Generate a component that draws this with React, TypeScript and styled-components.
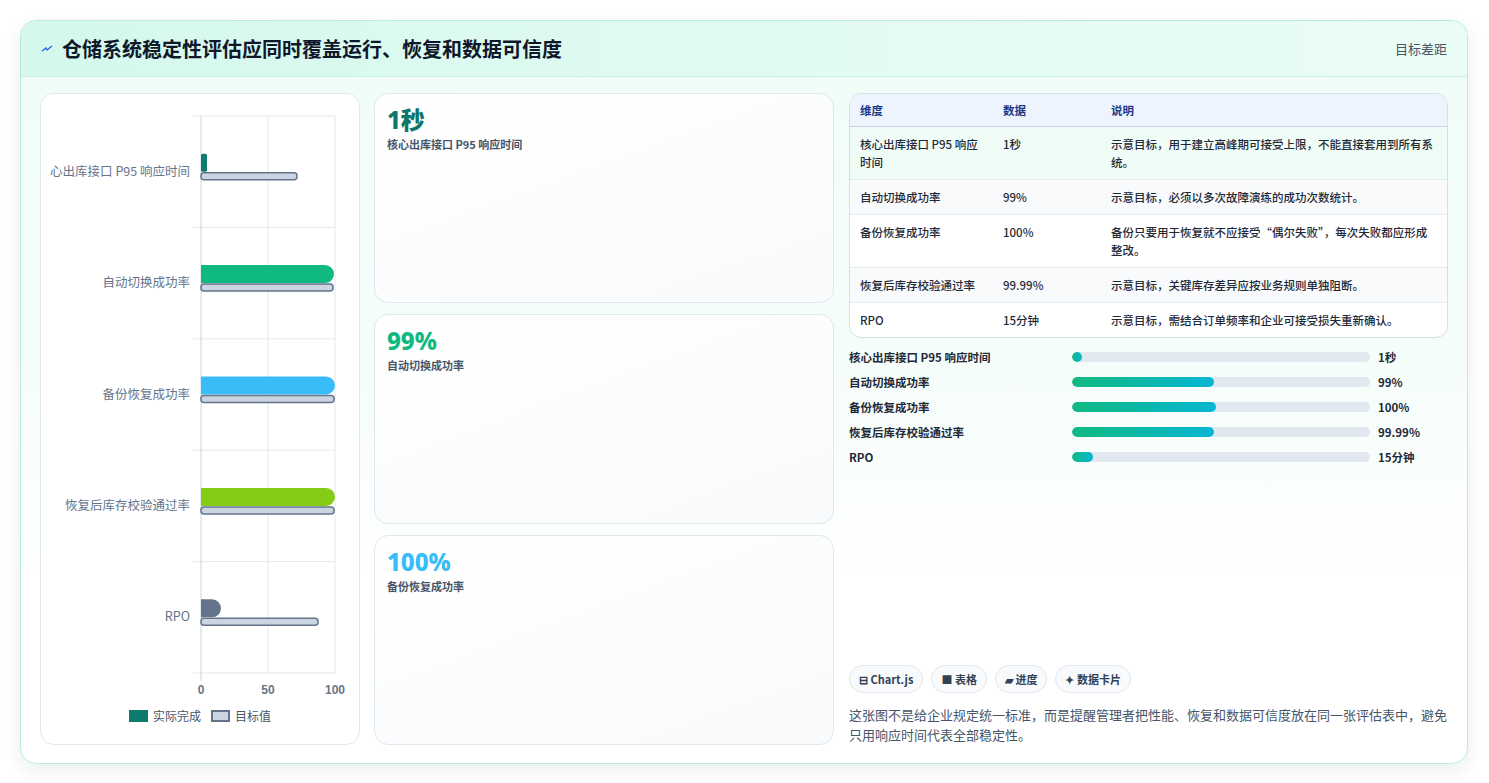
import React from "react";
import styled, { createGlobalStyle } from "styled-components";

const Global = createGlobalStyle`
  html, body { margin: 0; padding: 0; background: #fff; }
  body { font-family: "Noto Sans CJK SC", "Noto Sans", sans-serif; color: #1f2937; }
  * { box-sizing: border-box; }
`;

const Page = styled.div`
  padding: 20px 21px 19px 20px;
  height: 783px;
`;
const Card = styled.div`
  height: 744px;
  border: 1px solid #b9ecdf;
  border-radius: 16px;
  overflow: hidden;
  display: flex;
  flex-direction: column;
  background: linear-gradient(180deg, #effdf7 0%, #f6fdfb 50%, #ffffff 75%);
  box-shadow: 0 6px 18px rgba(15, 23, 42, 0.08);
`;
const Header = styled.div`
  height: 56px;
  flex: none;
  display: flex;
  align-items: center;
  justify-content: space-between;
  padding: 0 20px 0 20px;
  background: linear-gradient(90deg, #d4f8ec, #e3fbf4 60%, #eafcf6);
  border-bottom: 1px solid #cdeee4;
`;
const Title = styled.h1`
  margin: 0;
  font-size: 20px;
  font-weight: 700;
  color: #0f172a;
  display: flex;
  align-items: center;
  gap: 9px;
`;
const Gap = styled.span`
  font-size: 13px;
  color: #475569;
`;
const Body = styled.div`
  flex: 1;
  display: grid;
  grid-template-columns: 320px 460px 600px;
  gap: 14px;
  column-gap: 14px;
  padding: 16px 19px 18px 19px;
  min-height: 0;
  & > :nth-child(3) { margin-left: 1px; }
`;
const Panel = styled.div`
  background: #fff;
  border: 1px solid #dfe7ef;
  border-radius: 14px;
  display: flex;
  flex-direction: column;
`;
const ChartPanel = styled(Panel)`
  padding: 0;
  align-items: stretch;
`;
const Legend = styled.div`
  display: flex;
  justify-content: center;
  gap: 10px;
  font-size: 12px;
  color: #475569;
  margin-top: 1px;
`;
const LegendItem = styled.span`
  display: flex;
  align-items: center;
  gap: 5px;
`;
const Swatch = styled.span<{ $fill: string; $stroke: string }>`
  width: 19px;
  height: 12px;
  background: ${(p) => p.$fill};
  border: 2px solid ${(p) => p.$stroke};
`;
const Stats = styled.div`
  display: flex;
  flex-direction: column;
  gap: 11px;
`;
const Stat = styled(Panel)`
  flex: 1;
  padding: 11px 12px;
  background: linear-gradient(160deg, #ffffff, #f8fafc);
`;
const Big = styled.div<{ $c: string }>`
  font-family: "Noto Sans", "Noto Sans CJK SC", sans-serif;
  font-size: 24px;
  font-weight: 800;
  color: ${(p) => p.$c};
  line-height: 30px;
`;
const StatLabel = styled.div`
  font-size: 11px;
  font-weight: 600;
  color: #475569;
  margin-top: 1px;
`;
const Right = styled.div`
  display: flex;
  flex-direction: column;
`;
const TableWrap = styled.div`
  border: 1px solid #d5dee9;
  border-radius: 12px;
  overflow: hidden;
  background: #fff;
`;
const Table = styled.table`
  width: 100%;
  border-collapse: collapse;
  font-size: 11.5px;
  font-weight: 500;
  color: #1f2937;
  td, th { text-align: left; vertical-align: top; padding: 8px 10px; line-height: 18px; }
  th { background: #eef4fe; color: #1e3a8a; font-weight: 600; padding: 7px 10px; border-bottom: 1px solid #cbd5e1; }
  tr + tr td { border-top: 1px solid #e5ebf1; }
  tbody tr:nth-child(even) td { background: #f8fafc; }
  tbody tr:first-child td { background: #f0fdf7; }
`;
const Bars = styled.div`
  display: flex;
  flex-direction: column;
  gap: 7px;
  margin-top: 10px;
`;
const BarRow = styled.div`
  display: grid;
  grid-template-columns: 223px 306px 1fr;
  align-items: center;
  font-size: 11.5px;
  font-weight: 600;
  color: #1f2937;
  height: 18px;
`;
const Track = styled.div`
  height: 10px;
  border-radius: 5px;
  background: #e2e8f0;
  margin-right: 8px;
  overflow: hidden;
`;
const Fill = styled.div`
  height: 100%;
  border-radius: 5px;
  background: linear-gradient(90deg, #10b981, #06b6d4);
`;
const Spacer = styled.div`flex: 1;`;
const Chips = styled.div`
  display: flex;
  gap: 8px;
`;
const Chip = styled.span`
  font-size: 11px;
  font-weight: 600;
  color: #334155;
  border: 1px solid #e2e8f0;
  background: #f8fafc;
  border-radius: 14px;
  padding: 5px 9px;
`;
const Note = styled.p`
  margin: 12px 0 0;
  font-size: 13px;
  line-height: 20px;
  color: #475569;
`;

const rows = [
  { k: "核心出库接口 P95 响应时间", v: "1秒", d: "示意目标，用于建立高峰期可接受上限，不能直接套用到所有系统。", w: 10 },
  { k: "自动切换成功率", v: "99%", d: "示意目标，必须以多次故障演练的成功次数统计。", w: 142 },
  { k: "备份恢复成功率", v: "100%", d: "备份只要用于恢复就不应接受“偶尔失败”，每次失败都应形成整改。", w: 144 },
  { k: "恢复后库存校验通过率", v: "99.99%", d: "示意目标，关键库存差异应按业务规则单独阻断。", w: 142 },
  { k: "RPO", v: "15分钟", d: "示意目标，需结合订单频率和企业可接受损失重新确认。", w: 21 },
];

const chart = [
  { label: "心出库接口 P95 响应时间", a: 6, t: 96, c: "#0f7b6c" },
  { label: "自动切换成功率", a: 133, t: 132, c: "#10b981" },
  { label: "备份恢复成功率", a: 134, t: 133, c: "#38bdf8" },
  { label: "恢复后库存校验通过率", a: 134, t: 133, c: "#84cc16" },
  { label: "RPO", a: 20, t: 117, c: "#64748b" },
];

function Chart() {
  const x0 = 160, top = 22, rowH = 111.4;
  return (
    <svg width="320" height="612" viewBox="0 0 320 612">
      {[0, 1, 2, 3, 4, 5].map((i) => (
        <line key={i} x1={x0 - 8} x2={x0 + 134} y1={top + i * rowH} y2={top + i * rowH} stroke="#e5e7eb" />
      ))}
      <line x1={x0 + 67} x2={x0 + 67} y1={top} y2={top + 557} stroke="#e5e7eb" />
      <line x1={x0 + 134} x2={x0 + 134} y1={top} y2={top + 557} stroke="#e5e7eb" />
      <line x1={x0} x2={x0} y1={top} y2={top + 565} stroke="#cbd5e1" />
      {chart.map((r, i) => {
        const cy = top + rowH * (i + 0.5);
        return (
          <g key={i}>
            <text x={x0 - 11} y={cy + 4} textAnchor="end" fontSize="12.5" fill="#64748b" fontFamily="Noto Sans CJK SC, sans-serif">{r.label}</text>
            {r.a < 18 ? (
              <rect x={x0} y={cy - 18} width={r.a} height={18} rx={1.5} fill={r.c} />
            ) : (
              <path d={`M${x0} ${cy - 18} h${r.a - 9} a9 9 0 0 1 0 18 h-${r.a - 9} z`} fill={r.c} />
            )}
            <rect x={x0} y={cy + 1} width={r.t} height={7} rx={3} fill="#cbd5e1" stroke="#64748b" strokeWidth={1.5} />
          </g>
        );
      })}
      {[0, 50, 100].map((v, i) => (
        <text key={v} x={x0 + i * 67} y={600} textAnchor="middle" fontSize="12" fontWeight="700" fill="#64748b" fontFamily="Liberation Sans, sans-serif">{v}</text>
      ))}
    </svg>
  );
}

export default function App() {
  return (
    <Page>
      <Global />
      <Card>
        <Header>
          <Title>
            <svg width="12" height="8" viewBox="0 0 12 8"><path d="M1 6 L5 3 L6 5 L11 1" stroke="#2563eb" strokeWidth="1.3" fill="none" /></svg>
            仓储系统稳定性评估应同时覆盖运行、恢复和数据可信度
          </Title>
          <Gap>目标差距</Gap>
        </Header>
        <Body>
          <ChartPanel>
            <Chart />
            <Legend>
              <LegendItem><Swatch $fill="#0f7b6c" $stroke="#0f7b6c" />实际完成</LegendItem>
              <LegendItem><Swatch $fill="#cbd5e1" $stroke="#64748b" />目标值</LegendItem>
            </Legend>
          </ChartPanel>
          <Stats>
            <Stat><Big $c="#0f766e">1秒</Big><StatLabel>核心出库接口 P95 响应时间</StatLabel></Stat>
            <Stat><Big $c="#10b981">99%</Big><StatLabel>自动切换成功率</StatLabel></Stat>
            <Stat><Big $c="#38bdf8">100%</Big><StatLabel>备份恢复成功率</StatLabel></Stat>
          </Stats>
          <Right>
            <TableWrap>
              <Table>
                <colgroup><col style={{ width: 143 }} /><col style={{ width: 108 }} /><col /></colgroup>
                <thead><tr><th>维度</th><th>数据</th><th>说明</th></tr></thead>
                <tbody>
                  {rows.map((r) => (
                    <tr key={r.k}><td>{r.k}</td><td>{r.v}</td><td>{r.d}</td></tr>
                  ))}
                </tbody>
              </Table>
            </TableWrap>
            <Bars>
              {rows.map((r) => (
                <BarRow key={r.k}>
                  <span>{r.k}</span>
                  <Track><Fill style={{ width: r.w }} /></Track>
                  <span>{r.v}</span>
                </BarRow>
              ))}
            </Bars>
            <Spacer />
            <Chips>
              <Chip>⊟ Chart.js</Chip>
              <Chip>■ 表格</Chip>
              <Chip>▰ 进度</Chip>
              <Chip>✦ 数据卡片</Chip>
            </Chips>
            <Note>这张图不是给企业规定统一标准，而是提醒管理者把性能、恢复和数据可信度放在同一张评估表中，避免只用响应时间代表全部稳定性。</Note>
          </Right>
        </Body>
      </Card>
    </Page>
  );
}
